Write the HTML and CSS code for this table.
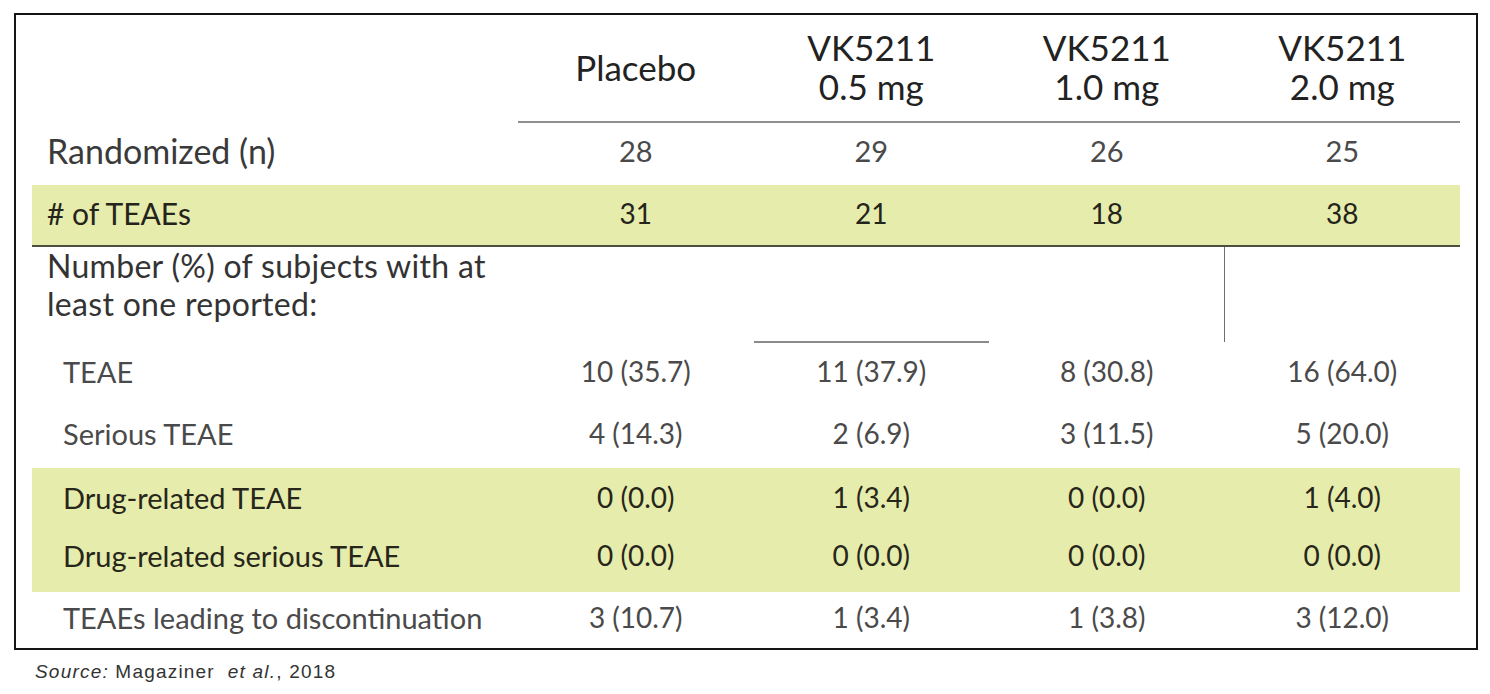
FILE: index.html
```html
<!DOCTYPE html>
<html lang="en">
<head>
<meta charset="utf-8">
<title>VK5211 safety summary</title>
<link rel="stylesheet" href="styles.css">
</head>
<body>
<div class="frame">
  <div class="row head">
    <div class="cell label"></div>
    <div class="cell hcol">Placebo</div>
    <div class="cell hcol">VK5211<br>0.5 mg</div>
    <div class="cell hcol">VK5211<br>1.0 mg</div>
    <div class="cell hcol">VK5211<br>2.0 mg</div>
  </div>
  <div class="row rand">
    <div class="cell label">Randomized (n)</div>
    <div class="cell num">28</div>
    <div class="cell num">29</div>
    <div class="cell num">26</div>
    <div class="cell num">25</div>
  </div>
  <div class="row green count">
    <div class="cell label">#&nbsp;of TEAEs</div>
    <div class="cell num">31</div>
    <div class="cell num">21</div>
    <div class="cell num">18</div>
    <div class="cell num">38</div>
  </div>
  <div class="row section">
    <div class="cell label">Number (%) of subjects with at<br>least one reported:</div>
    <div class="cell"></div>
    <div class="cell rule-b"></div>
    <div class="cell rule-r"></div>
    <div class="cell"></div>
  </div>
  <div class="row item">
    <div class="cell label sub">TEAE</div>
    <div class="cell num">10 (35.7)</div>
    <div class="cell num">11 (37.9)</div>
    <div class="cell num">8 (30.8)</div>
    <div class="cell num">16 (64.0)</div>
  </div>
  <div class="row item">
    <div class="cell label sub">Serious TEAE</div>
    <div class="cell num">4 (14.3)</div>
    <div class="cell num">2 (6.9)</div>
    <div class="cell num">3 (11.5)</div>
    <div class="cell num">5 (20.0)</div>
  </div>
  <div class="green-block">
    <div class="row item dr1">
      <div class="cell label sub">Drug-related TEAE</div>
      <div class="cell num">0 (0.0)</div>
      <div class="cell num">1 (3.4)</div>
      <div class="cell num">0 (0.0)</div>
      <div class="cell num">1 (4.0)</div>
    </div>
    <div class="row item dr2">
      <div class="cell label sub">Drug-related serious TEAE</div>
      <div class="cell num">0 (0.0)</div>
      <div class="cell num">0 (0.0)</div>
      <div class="cell num">0 (0.0)</div>
      <div class="cell num">0 (0.0)</div>
    </div>
  </div>
  <div class="row item last">
    <div class="cell label sub">TEAEs leading to discontinuation</div>
    <div class="cell num">3 (10.7)</div>
    <div class="cell num">1 (3.4)</div>
    <div class="cell num">1 (3.8)</div>
    <div class="cell num">3 (12.0)</div>
  </div>
</div>
<p class="source"><i>Source:</i> Magaziner&nbsp; <i>et al.</i>, 2018</p>
</body>
</html>
```

FILE: styles.css
```css
html, body {
  margin: 0;
  padding: 0;
  background: #ffffff;
}

body {
  font-family: "Lato", "Open Sans", "DejaVu Sans", sans-serif;
  color: #333333;
}

.frame {
  margin: 13px 0 0 14px;
  width: 1464px;
  height: 637px;
  box-sizing: border-box;
  border: 2px solid #151515;
  padding: 0 16px;
}

.row {
  display: grid;
  grid-template-columns: 486px repeat(4, 1fr);
}

.cell {
  display: flex;
  align-items: center;
  justify-content: center;
  text-align: center;
  box-sizing: border-box;
}

.cell.label {
  justify-content: flex-start;
  text-align: left;
  padding-left: 15px;
}

/* header */
.head {
  height: 108px;
}

.hcol {
  font-size: 35px;
  line-height: 39px;
  color: #222222;
  border-bottom: 2px solid #8e8e8e;
  padding-bottom: 2px;
}

/* randomized */
.rand {
  height: 62px;
  padding-bottom: 8px;
  box-sizing: border-box;
  font-size: 34px;
  color: #3a3a3a;
}

.rand .num {
  font-size: 29px;
  color: #4a4a4a;
}

.green {
  background: #e6ecac;
}

.count {
  height: 62px;
  box-sizing: border-box;
  padding-bottom: 5px;
  border-bottom: 2px solid #4f4f40;
  font-size: 30px;
  color: #24241a;
}

.count .num {
  font-size: 28px;
}

/* section heading */
.section {
  height: 97px;
  font-size: 32px;
  line-height: 38px;
  letter-spacing: 0.3px;
  color: #333333;
}

.section .label {
  align-items: flex-start;
  padding-top: 0;
}

.rule-b {
  border-bottom: 2px solid #8a8a8a;
  height: 96px;
}

.rule-r {
  border-right: 1px solid #6e6e6e;
  height: 95px;
}

/* item rows */
.item {
  height: 62px;
  padding-bottom: 8px;
  box-sizing: border-box;
  font-size: 28px;
  color: #4a4a4a;
}

.item .sub {
  padding-left: 31px;
  font-size: 29px;
}

.green-block {
  background: #e6ecac;
  height: 124px;
}

.green-block .item {
  color: #26261a;
}

.dr1 {
  height: 58px;
  padding-bottom: 0;
}

.dr2 {
  height: 58px;
  padding-bottom: 0;
}

.last {
  height: 56px;
  padding-bottom: 6px;
}

/* source note */
.source {
  margin: 11px 0 0 35px;
  font-family: "Liberation Sans", Arial, sans-serif;
  font-size: 19px;
  letter-spacing: 1.2px;
  color: #333333;
}
```
